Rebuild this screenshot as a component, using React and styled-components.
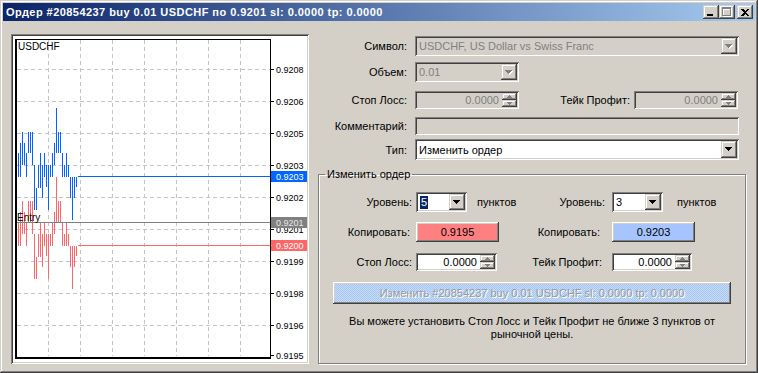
import React from 'react'
import styled, { createGlobalStyle, css } from 'styled-components'

const GlobalStyle = createGlobalStyle`
  html, body { margin: 0; padding: 0; background: #d4d0c8; }
  body { font-family: "Liberation Sans", Arial, sans-serif; font-size: 11px; color: #000; }
  * { box-sizing: border-box; }
`

const sunken = css`
  box-shadow: inset 1px 1px #808080, inset -1px -1px #ffffff, inset 2px 2px #404040, inset -2px -2px #d4d0c8;
`
const raised = css`
  box-shadow: inset -1px -1px #404040, inset 1px 1px #ffffff, inset -2px -2px #808080, inset 2px 2px #d4d0c8;
`
const raisedSoft = css`
  box-shadow: inset -1px -1px #404040, inset 1px 1px #d4d0c8, inset -2px -2px #808080, inset 2px 2px #ffffff;
`

// bars of the ask price, [top, bottom] in pixels, one every 2px
const askBars = [
  [153, 177], [153, 177], [143, 177], [132, 165], [143, 165], [153, 177], [132, 153], [132, 153],
  [132, 165], [165, 210], [188, 210], [165, 188], [153, 188], [165, 198], [153, 177], [165, 187],
  [165, 210], [165, 177], [153, 177], [143, 165], [108, 153], [132, 153], [132, 153], [153, 177],
  [165, 177], [153, 177], [165, 177], [177, 198], [177, 220], [177, 198], [177, 187],
]
const spreadPx = 69

const gridX = [48, 80, 112, 144, 176, 208, 240]
const prices = [
  ['0.9208', 69], ['0.9206', 101], ['0.9205', 133], ['0.9203', 165], ['0.9202', 197],
  ['0.9201', 229], ['0.9199', 261], ['0.9198', 293], ['0.9196', 325], ['0.9195', 355],
]

function Chart() {
  const font = { fontFamily: '"Liberation Sans", Arial, sans-serif' }
  return (
    <ChartSvg width="294" height="326" viewBox="13 36 294 326">
      <rect x="13" y="36" width="294" height="326" fill="#fff" />
      <g shapeRendering="crispEdges">
        {gridX.map(x => (
          <line key={x} x1={x + 0.5} y1={40} x2={x + 0.5} y2={356} stroke="#c4c4c4" strokeDasharray="4 3" />
        ))}
        {prices.slice(0, 9).map(([p, y]) => (
          <line key={p} x1={17} y1={y + 0.5} x2={270} y2={y + 0.5} stroke="#c4c4c4" strokeDasharray="4 3" />
        ))}
        {prices.map(([p, y]) => (
          <line key={'t' + p} x1={270} y1={y + 0.5} x2={274} y2={y + 0.5} stroke="#000" />
        ))}
        {askBars.map(([t, b], i) => (
          <line key={'a' + i} x1={16.5 + i * 2} y1={t} x2={16.5 + i * 2} y2={b} stroke="#0066ff" />
        ))}
        {askBars.map(([t, b], i) => (
          <line key={'b' + i} x1={16.5 + i * 2} y1={t + spreadPx} x2={16.5 + i * 2} y2={Math.min(b + spreadPx, 356)} stroke="#ff6666" />
        ))}
        <line x1={78} y1={176.5} x2={270} y2={176.5} stroke="#0066ff" />
        <line x1={78} y1={245.5} x2={270} y2={245.5} stroke="#ff6666" />
        <line x1={16} y1={222.5} x2={270} y2={222.5} stroke="#808080" />
        <rect x="15" y="39" width="256" height="1" fill="#000" />
        <rect x="15" y="39" width="2" height="320" fill="#000" />
        <rect x="15" y="357" width="256" height="2" fill="#000" />
        <rect x="270" y="39" width="1" height="320" fill="#000" />
      </g>
      <text x="18" y="50" fontSize="10" fill="#000" style={font}>USDCHF</text>
      <text x="17" y="221" fontSize="10" fill="#000" style={font}>Entry</text>
      {prices.map(([p, y]) => (
        <text key={'l' + p} x="276" y={y + 3.5} fontSize="9" fill="#000" style={font}>{p}</text>
      ))}
      <rect x="271" y="171" width="36" height="11" fill="#0066ff" />
      <text x="276" y="180" fontSize="9" fill="#fff" style={font}>0.9203</text>
      <rect x="271" y="217" width="36" height="11" fill="#808080" />
      <text x="276" y="226" fontSize="9" fill="#e8e8e8" style={font}>0.9201</text>
      <rect x="271" y="240" width="36" height="11" fill="#ff6666" />
      <text x="276" y="249" fontSize="9" fill="#fff" style={font}>0.9200</text>
    </ChartSvg>
  )
}

function DownArrow({ disabled }) {
  return (
    <svg width="8" height="5" viewBox="0 0 8 5" shapeRendering="crispEdges">
      {disabled && <polygon points="1,1 8,1 4.5,5" fill="#fff" />}
      <polygon points="0,0 7,0 3.5,4" fill={disabled ? '#808080' : '#000'} />
    </svg>
  )
}

function SpinArrow({ up }) {
  return (
    <svg width="5" height="3" viewBox="0 0 5 3" shapeRendering="crispEdges">
      <polygon points={up ? '0,3 5,3 2.5,0' : '0,0 5,0 2.5,3'} fill="#808080" />
    </svg>
  )
}

function Combo({ w, h, ml, disabled, selected, children }) {
  return (
    <Field $w={w} $h={h} $ml={ml} $disabled={disabled}>
      <Value $disabled={disabled}>
        {selected ? <Selected>{children}</Selected> : children}
      </Value>
      <DropButton>
        <DownArrow disabled={disabled} />
      </DropButton>
    </Field>
  )
}

function Spin({ w, ml, disabled, children }) {
  return (
    <Field $w={w} $h={18} $ml={ml} $disabled={disabled}>
      <Value $disabled={disabled} $right>{children}</Value>
      <SpinButtons>
        <SpinButton><SpinArrow up /></SpinButton>
        <SpinButton><SpinArrow /></SpinButton>
      </SpinButtons>
    </Field>
  )
}

function App() {
  return (
    <>
      <GlobalStyle />
      <Window>
        <TitleBar>
          <Caption>Ордер #20854237 buy 0.01 USDCHF по 0.9201 sl: 0.0000 tp: 0.0000</Caption>
          <CaptionButtons>
            <CaptionButton>
              <svg width="8" height="8" viewBox="0 0 8 8" shapeRendering="crispEdges">
                <rect x="0" y="6" width="6" height="2" fill="#000" />
              </svg>
            </CaptionButton>
            <CaptionButton>
              <svg width="10" height="10" viewBox="0 0 10 10" shapeRendering="crispEdges">
                <path d="M1 1h9v9H1z M2 3v6h7V3z" fill="#fff" fillRule="evenodd" />
                <path d="M0 0h9v9H0z M1 2v6h7V2z" fill="#808080" fillRule="evenodd" />
              </svg>
            </CaptionButton>
            <CaptionButton $gap>
              <svg width="8" height="7" viewBox="0 0 8 7" shapeRendering="crispEdges">
                <path d="M0 0h2l2 2 2-2h2L5 3.5 8 7H6L4 5 2 7H0l3-3.5z" fill="#000" />
              </svg>
            </CaptionButton>
          </CaptionButtons>
        </TitleBar>
        <Body>
          <ChartPanel>
            <Chart />
          </ChartPanel>
          <Form>
            <Row $h={20} $mt={2}>
              <Label $w={89}>Символ:</Label>
              <Combo w={324} h={20} ml={8} disabled>USDCHF, US Dollar vs Swiss Franc</Combo>
            </Row>
            <Row $h={20} $mt={6}>
              <Label $w={89}>Объем:</Label>
              <Combo w={104} h={20} ml={8} disabled>0.01</Combo>
            </Row>
            <Row $h={18} $mt={9}>
              <Label $w={89}>Стоп Лосс:</Label>
              <Spin w={104} ml={8} disabled>0.0000</Spin>
              <Label $w={111}>Тейк Профит:</Label>
              <Spin w={104} ml={4} disabled>0.0000</Spin>
            </Row>
            <Row $h={18} $mt={8}>
              <Label $w={89}>Комментарий:</Label>
              <Field $w={324} $h={18} $ml={8} $disabled />
            </Row>
            <Row $h={21} $mt={4}>
              <Label $w={89}>Тип:</Label>
              <Combo w={324} h={21} ml={8}>Изменить ордер</Combo>
            </Row>
            <Group>
              <Legend>Изменить ордер</Legend>
              <Row $h={20} $mt={12}>
                <Label $w={93}>Уровень:</Label>
                <Cell $w={108}>
                  <Combo w={51} h={20} ml={4} selected>5</Combo>
                  <Units $ml={10}>пунктов</Units>
                </Cell>
                <Label $w={85}>Уровень:</Label>
                <Cell>
                  <Combo w={51} h={20} ml={7}>3</Combo>
                  <Units $ml={14}>пунктов</Units>
                </Cell>
              </Row>
              <Row $h={20} $mt={10}>
                <Label $w={91}>Копировать:</Label>
                <Cell $w={110}>
                  <CopyButton $ml={6} $bg="#ff8080">0.9195</CopyButton>
                </Cell>
                <Label $w={80}>Копировать:</Label>
                <Cell>
                  <CopyButton $ml={12} $bg="#a6c4ff">0.9203</CopyButton>
                </Cell>
              </Row>
              <Row $h={18} $mt={11}>
                <Label $w={93}>Стоп Лосс:</Label>
                <Cell $w={108}>
                  <Spin w={81} ml={4}>0.0000</Spin>
                </Cell>
                <Label $w={82}>Тейк Профит:</Label>
                <Cell>
                  <Spin w={80} ml={10}>0.0000</Spin>
                </Cell>
              </Row>
              <ModifyButton disabled>Изменить #20854237 buy 0.01 USDCHF sl: 0.0000 tp: 0.0000</ModifyButton>
              <Note>
                Вы можете установить Стоп Лосс и Тейк Профит не ближе 3 пунктов от
                <br />
                рыночной цены.
              </Note>
            </Group>
          </Form>
        </Body>
      </Window>
    </>
  )
}

const Window = styled.div`
  width: 758px;
  height: 373px;
  padding: 3px;
  display: flex;
  flex-direction: column;
  background: #d4d0c8;
  box-shadow: inset -1px -1px #404040, inset 1px 1px #d4d0c8, inset -2px -2px #808080, inset 2px 2px #ffffff;
`

const TitleBar = styled.div`
  height: 18px;
  flex-shrink: 0;
  display: flex;
  align-items: center;
  padding: 0 2px 0 3px;
  background: linear-gradient(to right, #0a246a, #a6caf0);
`

const Caption = styled.div`
  color: #fff;
  font-weight: bold;
  font-size: 11px;
  letter-spacing: 0.45px;
  white-space: nowrap;
`

const CaptionButtons = styled.div`
  margin-left: auto;
  display: flex;
  margin-top: -1px;
`

const CaptionButton = styled.div`
  width: 16px;
  height: 14px;
  margin-left: ${p => (p.$gap ? 2 : 0)}px;
  display: flex;
  align-items: center;
  justify-content: center;
  padding-top: 1px;
  background: #d4d0c8;
  ${raisedSoft}
`

const Body = styled.div`
  flex: 1;
  display: flex;
  gap: 9px;
  padding: 13px 0 0 8px;
`

const ChartPanel = styled.div`
  width: 298px;
  height: 330px;
  flex-shrink: 0;
  padding: 2px;
  background: #fff;
  ${sunken}
`

const ChartSvg = styled.svg`
  display: block;
`

const Form = styled.div`
  width: 428px;
  display: flex;
  flex-direction: column;
`

const Row = styled.div`
  display: flex;
  align-items: center;
  height: ${p => p.$h}px;
  margin-top: ${p => p.$mt}px;
  flex-shrink: 0;
`

const Label = styled.div`
  width: ${p => p.$w}px;
  flex-shrink: 0;
  text-align: right;
  white-space: nowrap;
`

const Cell = styled.div`
  display: flex;
  align-items: center;
  flex-shrink: 0;
  width: ${p => (p.$w ? `${p.$w}px` : 'auto')};
`

const Units = styled.span`
  margin-left: ${p => p.$ml}px;
  white-space: nowrap;
`

const Field = styled.div`
  width: ${p => p.$w}px;
  height: ${p => p.$h}px;
  margin-left: ${p => p.$ml || 0}px;
  flex-shrink: 0;
  display: flex;
  padding: 2px;
  background: ${p => (p.$disabled ? '#d4d0c8' : '#fff')};
  ${sunken}
`

const Value = styled.div`
  flex: 1;
  min-width: 0;
  display: flex;
  align-items: center;
  justify-content: ${p => (p.$right ? 'flex-end' : 'flex-start')};
  padding: ${p => (p.$right ? '0 3px 0 0' : '0 0 0 2px')};
  color: ${p => (p.$disabled ? '#808080' : '#000')};
  white-space: nowrap;
  overflow: hidden;
`

const Selected = styled.span`
  background: #0a246a;
  color: #fff;
  padding: 0 1px;
  line-height: 13px;
`

const DropButton = styled.div`
  width: 16px;
  flex-shrink: 0;
  display: flex;
  align-items: center;
  justify-content: center;
  background: #d4d0c8;
  ${raisedSoft}
`

const SpinButtons = styled.div`
  width: 15px;
  flex-shrink: 0;
  display: flex;
  flex-direction: column;
`

const SpinButton = styled.div`
  flex: 1;
  display: flex;
  align-items: center;
  justify-content: center;
  background: #d4d0c8;
  ${raisedSoft}
`

const CopyButton = styled.div`
  width: 83px;
  height: 20px;
  margin-left: ${p => p.$ml}px;
  display: flex;
  align-items: center;
  justify-content: center;
  background: ${p => p.$bg};
  ${raised}
`

const Group = styled.fieldset`
  margin: 8px 0 0 0;
  padding: 0;
  min-width: 0;
  width: 428px;
  height: 196px;
  border: 1px solid #808080;
  box-shadow: inset 1px 1px #fff, 1px 1px #fff;
  display: flex;
  flex-direction: column;
`

const Legend = styled.legend`
  margin-left: 6px;
  padding: 0 2px;
  line-height: 12px;
`

const ModifyButton = styled.button`
  align-self: center;
  width: 398px;
  height: 22px;
  margin-top: 11px;
  border: none;
  padding: 0;
  font: inherit;
  color: #9a9a9a;
  text-shadow: 1px 1px #fff;
  background-color: #b4d0f4;
  background-image: repeating-conic-gradient(#a6c6f0 0 25%, #c6dcf8 0 50%);
  background-size: 2px 2px;
  ${raised}
`

const Note = styled.div`
  margin-top: 11px;
  text-align: center;
  line-height: 13px;
`

export default App
